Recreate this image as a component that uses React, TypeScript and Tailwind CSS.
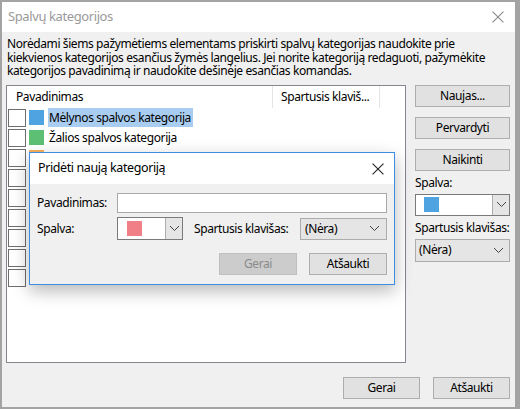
import React from "react";

const FONT = "font-['Segoe_UI','Noto_Sans',sans-serif]";

function Chevron({ className = "" }: { className?: string }) {
  return (
    <svg width="11" height="7" viewBox="0 0 11 7" className={className} fill="none" stroke="#444" strokeWidth="1">
      <path d="M1 1l4.5 4.5L10 1" />
    </svg>
  );
}

function CloseX({ size = 11, color = "#333" }: { size?: number; color?: string }) {
  return (
    <svg width={size} height={size} viewBox="0 0 11 11" fill="none" stroke={color} strokeWidth="1">
      <path d="M0.5 0.5l10 10M10.5 0.5l-10 10" />
    </svg>
  );
}

function WinButton({ children, className = "", disabled }: { children: React.ReactNode; className?: string; disabled?: boolean }) {
  return (
    <button
      type="button"
      className={`h-[22px] flex items-center justify-center text-[12px] border ${disabled ? "bg-[#cccccc] border-[#bfbfbf] text-[#8a8a8a]" : "bg-[#e1e1e1] border-[#adadad] text-black"} ${className}`}
    >
      {children}
    </button>
  );
}

// rows below the third one sit behind the popup, so their labels never show
const rows = [
  { color: "bg-[#4fa3e0]", label: "Mėlynos spalvos kategorija", selected: true },
  { color: "bg-[#5cbf74]", label: "Žalios spalvos kategorija" },
  { color: "bg-[#f6b25e]", label: "Oranžinės spalvos kategorija" },
  { color: "bg-[#b28ad8]", label: "" },
  { color: "bg-[#f0727c]", label: "" },
  { color: "bg-[#f6dc5e]", label: "" },
  { color: "bg-[#5cbf74]", label: "" },
  { color: "bg-[#4fa3e0]", label: "" },
  { color: "bg-[#f6b25e]", label: "" },
];

export default function App() {
  return (
    <div className={`w-[520px] h-[409px] bg-[#a3a3a3] pl-[2px] pt-[2px] tracking-[-0.4px] ${FONT}`}>
      <div className="relative w-[513px] h-[405px] bg-[#f0f0f0] flex flex-col">
        {/* title bar */}
        <div className="h-[30px] bg-white flex items-center justify-between pl-[6px] pr-[11px]">
          <span className="text-[13px] text-[#9a9a9a]">Spalvų kategorijos</span>
          <CloseX size={12} color="#8a8a8a" />
        </div>

        <div className="flex-1 flex flex-col pl-[4px] pr-[4px] pt-[5px]">
          <p className="text-[12px] leading-[13.5px] text-black pl-[1px] whitespace-nowrap">
            Norėdami šiems pažymėtiems elementams priskirti spalvų kategorijas naudokite prie
            <br />
            kiekvienos kategorijos esančius žymės langelius. Jei norite kategoriją redaguoti, pažymėkite
            <br />
            kategorijos pavadinimą ir naudokite dešinėje esančias komandas.
          </p>

          <div className="flex gap-[9px] mt-[7px]">
            {/* list */}
            <div className="w-[400px] h-[278px] bg-white border border-[#828790] overflow-hidden">
              <div className="flex h-[22px] text-[12px] items-center">
                <div className="w-[266px] pl-[9px] border-r border-[#e5e5e5] h-full flex items-center">Pavadinimas</div>
                <div className="w-[107px] pl-[8px] border-r border-[#e5e5e5] h-full flex items-center whitespace-nowrap">Spartusis klaviš...</div>
              </div>
              <div className="flex flex-col">
                {rows.map((r, i) => (
                  <div key={i} className="h-[20px] flex items-center pl-[1px]">
                    <div className="w-[18px] h-[18px] border border-[#6e6e6e] bg-white" />
                    <div className={`w-[15px] h-[15px] ml-[3px] ${r.color}`} />
                    {r.label && (
                      <span className={`ml-[4px] text-[12px] h-[19px] flex items-center pl-[1px] pr-[2px] ${r.selected ? "bg-[#a8cdf0]" : ""}`}>{r.label}</span>
                    )}
                  </div>
                ))}
              </div>
            </div>

            {/* right column */}
            <div className="w-[95px] flex flex-col">
              <WinButton>Naujas...</WinButton>
              <WinButton className="mt-[10px]">Pervardyti</WinButton>
              <WinButton className="mt-[10px]">Naikinti</WinButton>
              <span className="text-[12px] mt-[4px] leading-[16px]">Spalva:</span>
              <div className="mt-[3px] h-[22px] flex bg-white border border-[#7a7a7a]">
                <div className="flex-1 flex items-center pl-[8px]">
                  <div className="w-[15px] h-[15px] bg-[#4fa3e0]" />
                </div>
                <div className="w-[17px] bg-[#e5e5e5] border-l border-[#adadad] flex items-center justify-center">
                  <Chevron />
                </div>
              </div>
              <span className="text-[12px] mt-[4px] leading-[16px] whitespace-nowrap">Spartusis klavišas:</span>
              <div className="mt-[3px] h-[23px] flex items-center justify-between bg-[#e5e5e5] border border-[#acacac] pl-[3px] pr-[5px] text-[12px]">
                <span>(Nėra)</span>
                <Chevron />
              </div>
            </div>
          </div>

          <div className="flex justify-end gap-[13px] mt-[14px] pr-[1px]">
            <WinButton className="w-[77px]">Gerai</WinButton>
            <WinButton className="w-[77px]">Atšaukti</WinButton>
          </div>
        </div>

        {/* popup dialog */}
        <div className="absolute left-[27px] top-[150px] w-[366px] h-[133px] border border-[#3b8ee0] bg-[#f0f0f0] shadow-[0_6px_16px_rgba(0,0,0,0.28)] flex flex-col">
          <div className="h-[31px] bg-white flex items-center justify-between pl-[8px] pr-[10px]">
            <span className="text-[12.5px] text-black">Pridėti naują kategoriją</span>
            <CloseX size={12} color="#222" />
          </div>
          <div className="flex flex-col px-[7px] pt-[9px]">
            <div className="flex items-center h-[20px]">
              <span className="w-[80px] text-[12px]">Pavadinimas:</span>
              <div className="flex-1 h-[20px] bg-white border border-[#a9a9a9]" />
            </div>
            <div className="flex items-center mt-[4px] h-[23px]">
              <span className="w-[80px] text-[12px]">Spalva:</span>
              <div className="w-[66px] h-[23px] flex bg-white border border-[#7a7a7a]">
                <div className="flex-1 flex items-center pl-[9px]">
                  <div className="w-[15px] h-[15px] bg-[#f07f88]" />
                </div>
                <div className="w-[17px] bg-[#e5e5e5] border-l border-[#adadad] flex items-center justify-center">
                  <Chevron />
                </div>
              </div>
              <span className="ml-[11px] text-[12px] whitespace-nowrap">Spartusis klavišas:</span>
              <div className="ml-auto w-[87px] h-[22px] flex items-center justify-between bg-[#e5e5e5] border border-[#acacac] pl-[4px] pr-[6px] text-[12px]">
                <span>(Nėra)</span>
                <Chevron />
              </div>
            </div>
            <div className="flex justify-end gap-[12px] mt-[13px]">
              <WinButton disabled className="w-[78px] h-[21px]">Gerai</WinButton>
              <WinButton className="w-[78px] h-[21px]">Atšaukti</WinButton>
            </div>
          </div>
        </div>
      </div>
    </div>
  );
}
